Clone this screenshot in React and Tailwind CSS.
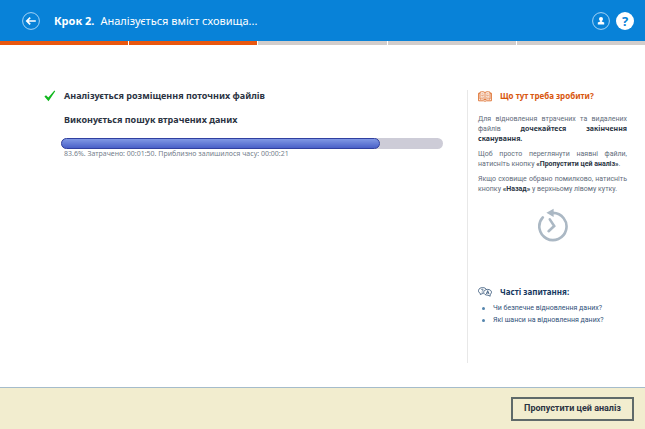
import React from 'react';

const steps = [true, true, false, false, false];

const questions = [
  'Чи безпечне відновлення даних?',
  'Які шанси на відновлення даних?',
];

const ArrowIcon = () => (
  <svg viewBox="0 0 18 18" className="size-[18px]" fill="none">
    <circle cx="9" cy="9" r="8.4" stroke="#a5d3f5" strokeWidth="1" />
    <path d="M13.8 9H5M8.2 5.6L4.8 9L8.2 12.4" stroke="#fff" strokeWidth="1.7" />
  </svg>
);

const UserIcon = () => (
  <svg viewBox="0 0 18 18" className="size-[18px]" fill="none">
    <circle cx="9" cy="9" r="8.4" stroke="#a5d3f5" strokeWidth="1" />
    <circle cx="9" cy="6.9" r="2" fill="#fff" />
    <path d="M8.2 8h1.6v1.6l2.4 1v1.8H5.8v-1.8l2.4-1z" fill="#fff" />
  </svg>
);

const CheckIcon = () => (
  <svg viewBox="0 0 12 12" className="size-3 shrink-0">
    <path d="M0.4 6.4L2 5.2L4.3 7.6L10.4 0.6L11.2 1.2L4.5 11.2z" fill="#12b81f" />
  </svg>
);

const BookIcon = () => (
  <svg viewBox="0 0 14 11" className="h-[11px] w-3.5 shrink-0" fill="none" stroke="#dc6a26" strokeWidth="0.9">
    <path d="M2 1.2C4 0.4 6 0.7 7 1.6C8 0.7 10 0.4 12 1.2V8.2C10 7.6 8 7.8 7 8.8C6 7.8 4 7.6 2 8.2z" />
    <path d="M7 1.6V8.8M2 2.2H0.6V9.8H5.8L7 10.3L8.2 9.8H13.4V2.2H12" />
    <path d="M3.3 3C4.2 2.7 5 2.8 5.8 3.2M3.3 4.6C4.2 4.3 5 4.4 5.8 4.8M3.3 6.2C4.2 5.9 5 6 5.8 6.4M8.2 3.2C9 2.8 9.8 2.7 10.7 3M8.2 4.8C9 4.4 9.8 4.3 10.7 4.6M8.2 6.4C9 6 9.8 5.9 10.7 6.2" strokeWidth="0.7" />
  </svg>
);

const HistoryIcon = () => (
  <svg viewBox="0 0 32 34" className="h-[34px] w-8" fill="none" stroke="#abb8c4">
    <path d="M16 4.9A13.6 13.6 0 1 1 5.8 9.4" strokeWidth="2.6" strokeLinecap="round" />
    <path d="M9.4 4.8L16.6 0.8V9z" fill="#abb8c4" stroke="none" />
    <path d="M12.8 11.4L17.2 18L11.6 23.2" strokeWidth="2.6" strokeLinecap="round" />
  </svg>
);

const ChatIcon = () => (
  <svg viewBox="0 0 14 10" className="h-2.5 w-3.5 shrink-0" fill="none" stroke="#2f4f74" strokeWidth="0.8">
    <path d="M2.4 7.6L2.2 6.2C0.8 5.6 0.4 4.6 0.5 3.4C0.7 1.6 2.6 0.6 4.6 0.6C6.4 0.6 7.8 1.3 8.3 2.4M2.4 7.6L4.2 6.6H5.4" />
    <path d="M9.6 2.4C11.8 2.4 13.5 3.6 13.5 5.2C13.5 6.4 12.8 7.2 12 7.6L12.2 9.2L10 8.2C7.6 8.3 5.7 7 5.7 5.3C5.7 3.7 7.4 2.4 9.6 2.4z" />
    <path d="M3.2 2.8C3.6 1.9 5.2 2 5.2 3C5.2 3.7 4.2 3.7 4.2 4.5M4.2 5V5.6M8.4 7L9.7 3.6L11 7M8.8 5.9H10.6" />
  </svg>
);

const App = () => (
  <div className="flex min-h-screen flex-col bg-white font-['Noto_Sans','Open_Sans',sans-serif] text-[#2b3342]">
    <header className="flex h-[41px] items-center bg-[#0882d8] pr-[11px] pl-[22px] text-white">
      <button type="button" aria-label="Назад">
        <ArrowIcon />
      </button>
      <h1 className="ml-3.5 flex-1 text-[11px] leading-4">
        <b className="mr-1.5">Крок 2.</b>Аналізується вміст сховища...
      </h1>
      <div className="flex items-center gap-1.5">
        <button type="button" aria-label="Профіль">
          <UserIcon />
        </button>
        <button
          type="button"
          aria-label="Довідка"
          className="size-[18px] rounded-full bg-white text-[13px] leading-[18px] font-bold text-[#0882d8]"
        >
          ?
        </button>
      </div>
    </header>

    {/* Steps */}
    <div className="flex gap-px">
      {steps.map((done, index) => (
        <div key={index} className={`h-1 flex-1 ${done ? 'bg-[#e9570e]' : 'bg-[#d2cdcb]'}`} />
      ))}
    </div>

    <main className="flex flex-1 pt-[45px] pr-[18px] pb-6 pl-11">
      <section className="flex-1 pr-6 text-[9px] leading-3 font-bold">
        <div className="flex items-center gap-2">
          <CheckIcon />
          <h2>Аналізується розміщення поточних файлів</h2>
        </div>
        <div className="mt-3 pl-[17px]">
          <h2 className="pl-[3px]">Виконується пошук втрачених даних</h2>
          <div
            role="progressbar"
            aria-label="Виконується пошук втрачених даних"
            aria-valuenow={83.6}
            className="mt-3 h-[11px] rounded-full bg-[#cdccd7]"
          >
            <div
              className="h-full rounded-full border border-[#3040a0] bg-linear-to-b from-[#8198e4] to-[#4a60c8]"
              style={{ width: '83.6%' }}
            />
          </div>
          <p className="pl-[3px] text-[7px] leading-[10px] font-normal text-[#75808c]">
            83.6%. Затрачено: 00:01:50. Приблизно залишилося часу: 00:00:21
          </p>
        </div>
      </section>

      <aside className="w-40 border-l border-[#e8e8e8] pl-2.5 text-[7px] leading-[10px]">
        <div className="flex items-center gap-2 text-[#d8560e]">
          <BookIcon />
          <h3 className="text-[8px] leading-3 font-bold">Що тут треба зробити?</h3>
        </div>
        <div className="mt-3 space-y-[5px] text-justify font-['Roboto',sans-serif] text-[#626c7a] [&_b]:text-[#2b3544]">
          <p>
            Для відновлення втрачених та видалених файлів{' '}
            <b className="font-['Noto_Sans',sans-serif]">дочекайтеся закінчення сканування.</b>
          </p>
          <p>
            Щоб просто переглянути наявні файли, натисніть кнопку <b>«Пропустити цей аналіз»</b>.
          </p>
          <p>
            Якщо сховище обрано помилково, натисніть кнопку <b>«Назад»</b> у верхньому лівому кутку.
          </p>
        </div>
        <div className="mt-3.5 flex justify-center">
          <HistoryIcon />
        </div>
        <div className="mt-11 flex items-center gap-2 text-[#17385f]">
          <ChatIcon />
          <h3 className="text-[8px] leading-3 font-bold">Часті запитання:</h3>
        </div>
        <ul className="mt-1 font-['Roboto',sans-serif] text-[#2f5078]">
          {questions.map((question) => (
            <li key={question} className="flex h-3 items-center gap-2 pl-1">
              <span className="size-[3px] rounded-full bg-[#5585ad]" />
              <a href="#">{question}</a>
            </li>
          ))}
        </ul>
      </aside>
    </main>

    <footer className="flex h-[42px] items-center justify-end border-t border-[#a5bccb] bg-[#f2edcf] pr-[11px]">
      <button type="button" className="h-6 border-2 border-[#5f6a6a] px-[11px] font-['Roboto',sans-serif] text-[9px] font-bold">
        Пропустити цей аналіз
      </button>
    </footer>
  </div>
);

export default App;
